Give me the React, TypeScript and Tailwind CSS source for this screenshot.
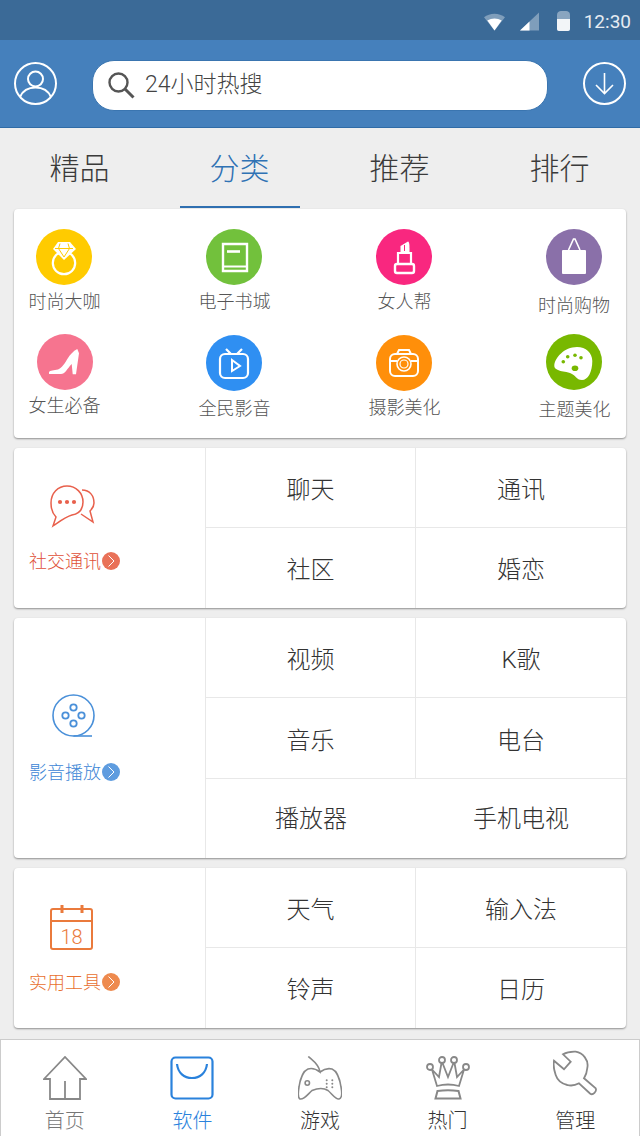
import React from "react";

const FONT = "font-['Roboto','Noto_Sans_CJK_SC',sans-serif]";

function Circle({ bg, children }: { bg: string; children: React.ReactNode }) {
  return (
    <div className={`w-14 h-14 rounded-full ${bg}`}>
      <svg width="56" height="56" viewBox="0 0 56 56" className="block">{children}</svg>
    </div>
  );
}

const Ring = () => (
  <Circle bg="bg-[#ffcb00]">
    <circle cx="28" cy="34" r="11.2" fill="none" stroke="#fff" strokeWidth="2.2" />
    <polygon points="22,13 34,13 40,20 28,31 17,20" fill="#fff" />
    <path d="M19 19.5H37M24 14.5L22.5 19.5L28 28M32 14.5L33.5 19.5L28 28" stroke="#ffcb00" strokeWidth="1" fill="none" />
  </Circle>
);
const Book = () => (
  <Circle bg="bg-[#72c13c]">
    <path d="M17 15H41V42H17Z" fill="none" stroke="#fff" strokeWidth="2.4" />
    <path d="M17 37.5H41" stroke="#fff" strokeWidth="2" />
    <path d="M21 22.5H34" stroke="#fff" strokeWidth="2.6" />
  </Circle>
);
const Lipstick = () => (
  <Circle bg="bg-[#f9277f]">
    <path d="M24.5 24V17L32 12.5C33.5 13 33.5 16 33.5 24Z" fill="#fff" />
    <path d="M22 36V24H35V36" fill="none" stroke="#fff" strokeWidth="2.2" />
    <rect x="19" y="35" width="19" height="9" rx="2" fill="none" stroke="#fff" strokeWidth="2.4" />
    <path d="M28.5 16V22" stroke="#f9277f" strokeWidth="1" />
  </Circle>
);
const Bag = () => (
  <Circle bg="bg-[#8a70a9]">
    <rect x="16" y="21" width="24" height="24" rx="1" fill="#fff" />
    <path d="M22.5 21L27.5 10H29L34 21" fill="none" stroke="#fff" strokeWidth="1.6" />
  </Circle>
);
const Shoe = () => (
  <Circle bg="bg-[#f6748f]">
    <path d="M40.3 15C36 17 33 21 31 24C28 29 25 34 21 35.5C17 36.5 13 36.5 12 38V40H24C28 40 30 35 34.7 30L35.7 40.3H39L42 19.3Z" fill="#fff" />
  </Circle>
);
const Tv = () => (
  <Circle bg="bg-[#2f8ff2]">
    <rect x="14" y="19" width="28" height="24" rx="5" fill="none" stroke="#fff" strokeWidth="2.2" />
    <path d="M20 14L25 19M36 14L31 19" stroke="#fff" strokeWidth="2.2" />
    <path d="M26 25L34 31L26 36Z" fill="none" stroke="#fff" strokeWidth="2" />
  </Circle>
);
const Camera = () => (
  <Circle bg="bg-[#ff8f0a]">
    <rect x="14" y="19" width="28" height="22" rx="5" fill="none" stroke="#fff" strokeWidth="2" />
    <path d="M21 19L23 15H33L35 19M14 26H21M35 26H42" fill="none" stroke="#fff" strokeWidth="2" />
    <circle cx="28" cy="29" r="7" fill="none" stroke="#fff" strokeWidth="1.6" />
    <circle cx="28" cy="29" r="4" fill="none" stroke="#fff" strokeWidth="1.2" />
  </Circle>
);
const Palette = () => (
  <Circle bg="bg-[#78b800]">
    <path d="M8.3 31C9 24 18 13 31 13C40 13 46.3 19 46.3 27C46.3 38 42 46 36 46C30 46 30 41 24 39C19 37 15 38 12 36C9 35 8 33 8.3 31Z" fill="#fff" />
    <circle cx="17.3" cy="27.7" r="1.8" fill="#78b800" />
    <circle cx="21.7" cy="22.7" r="1.8" fill="#78b800" />
    <circle cx="29" cy="21.3" r="1.8" fill="#78b800" />
    <circle cx="35" cy="23.7" r="1.8" fill="#78b800" />
    <ellipse cx="29" cy="34.3" rx="3.3" ry="2.8" fill="#78b800" />
  </Circle>
);

function Chevron({ bg }: { bg: string }) {
  return (
    <span className={`w-[18px] h-[18px] rounded-full shrink-0 ${bg}`}>
      <svg width="18" height="18" viewBox="0 0 18 18" className="block">
        <path d="M6.5 3.5L12 9L6.5 14.5" fill="none" stroke="#fff" strokeWidth="1" />
      </svg>
    </span>
  );
}

function Entry({ icon, label, className }: { icon: React.ReactNode; label: string; className: string }) {
  return (
    <div className="w-[72px] flex flex-col items-center">
      {icon}
      <span className={`text-[18px] leading-6 font-light text-[#555] whitespace-nowrap ${className}`}>{label}</span>
    </div>
  );
}

function Cell({ label, right, bottom, flat }: { label: string; right?: boolean; bottom?: boolean; flat?: boolean }) {
  const pad = flat ? "" : bottom ? "pt-[5px]" : "pt-[3px]";
  return (
    <div
      className={`w-[210px] shrink-0 flex items-center justify-center text-[24px] font-light text-[#333] ${pad} ${right ? "border-r border-[#e8e8e8]" : ""} ${bottom ? "border-b border-[#e8e8e8]" : ""}`}
    >
      {label}
    </div>
  );
}

function Card({ className, left, children }: { className: string; left: React.ReactNode; children: React.ReactNode }) {
  return (
    <div className={`mx-[14px] bg-white rounded-[4px] shadow-[0_1px_2px_rgba(0,0,0,0.4)] flex ${className}`}>
      <div className="w-[192px] shrink-0 border-r border-[#e8e8e8]">{left}</div>
      <div className="flex-1 flex flex-col">{children}</div>
    </div>
  );
}

const tabs = ["精品", "分类", "推荐", "排行"];

function NavItem({ label, color, icon }: { label: string; color: string; icon: React.ReactNode }) {
  return (
    <div className="flex-1 flex flex-col items-center">
      <div className="h-[53px] shrink-0">{icon}</div>
      <span className={`text-[20px] leading-6 font-light shrink-0 ${color}`}>{label}</span>
    </div>
  );
}

export default function App() {
  return (
    <div className={`w-[640px] h-[1136px] overflow-hidden bg-[#eeeeee] flex flex-col ${FONT}`}>
      {/* status bar */}
      <div className="h-10 shrink-0 bg-[#3b6a97] flex items-center justify-end pr-[9px]">
        <svg width="21" height="18" viewBox="0 0 22 18" className="mr-[15px] mt-[3px]">
          <path d="M0 4C6 -1 16 -1 22 4L11 18Z" fill="#fff" fillOpacity="0.35" />
          <path d="M3.5 7.5C8 4.5 14 4.5 18.5 7.5L11 18Z" fill="#fff" />
        </svg>
        <svg width="19" height="19" viewBox="0 0 20 19" className="mr-[18px] mt-[2px]">
          <path d="M0 19L20 0V19Z" fill="#fff" fillOpacity="0.35" />
          <path d="M0 19L10 9.5V19Z" fill="#fff" />
        </svg>
        <svg width="13" height="20" viewBox="0 0 13 20" className="mr-[14px] mt-[1px]">
          <path d="M0 4C0 1 2 0 4 0H9C11 0 13 1 13 4V18C13 19 12 20 11 20H2C1 20 0 19 0 18Z" fill="#fff" fillOpacity="0.4" />
          <path d="M0 8H13V18C13 19 12 20 11 20H2C1 20 0 19 0 18Z" fill="#f2f5f8" />
        </svg>
        <span className="text-[19px] leading-none text-[#e6ecf2] mt-[2px] font-['Roboto',sans-serif]">12:30</span>
      </div>

      {/* header */}
      <div className="h-[88px] shrink-0 bg-[#4580bc] border-b border-[#2f6ba6] flex items-center pl-[14px] pr-[14px]">
        <svg width="43" height="43" viewBox="0 0 43 43" fill="none" stroke="#fff" strokeWidth="2" className="shrink-0">
          <circle cx="21.5" cy="21.5" r="20.5" />
          <circle cx="21.5" cy="17" r="7.5" />
          <path d="M6 35C9 28 15 25.5 21.5 25.5C28 25.5 34 28 37 35" />
        </svg>
        <div className="ml-[35px] mt-[4px] w-[457px] h-[51px] rounded-[22px] bg-white border border-[#3a75b0] flex items-center pl-[15px]">
          <svg width="27" height="27" viewBox="0 0 27 27" fill="none" stroke="#555" className="shrink-0">
            <circle cx="10.5" cy="10.5" r="9" strokeWidth="2.4" />
            <path d="M17 17L25.5 25.5" strokeWidth="3" />
          </svg>
          <span className="ml-[10px] text-[23px] font-light text-[#444]">24小时热搜</span>
        </div>
        <svg width="43" height="43" viewBox="0 0 43 43" fill="none" stroke="#fff" strokeWidth="2" className="shrink-0 ml-[35px]">
          <circle cx="21.5" cy="21.5" r="20.5" />
          <path d="M21.5 11V31M13 23L21.5 31.5L30 23" strokeWidth="1.6" />
        </svg>
      </div>

      {/* tabs */}
      <div className="h-[81px] shrink-0 flex">
        {tabs.map((t, i) => (
          <div key={t} className="flex-1 relative flex items-center justify-center pr-[1px]">
            <span className={`text-[30px] font-light ${i === 1 ? "text-[#2f72b4]" : "text-[#3a3a3a]"}`}>{t}</span>
            {i === 1 && <div className="absolute bottom-[1px] left-[20px] w-[120px] h-[2px] bg-[#2f6fb0]" />}
          </div>
        ))}
      </div>

      {/* icon card */}
      <div className="mx-[14px] h-[229px] shrink-0 bg-white rounded-[4px] shadow-[0_1px_2px_rgba(0,0,0,0.4)] pl-[14px] pr-[16px] pt-[20px]">
        <div className="flex justify-between h-[85px] items-start">
          <Entry icon={<Ring />} label="时尚大咖" className="mt-[5px] ml-[1px]" />
          <Entry icon={<Book />} label="电子书城" className="mt-[5px] ml-[1px]" />
          <Entry icon={<Lipstick />} label="女人帮" className="mt-[5px] ml-[1px]" />
          <Entry icon={<Bag />} label="时尚购物" className="mt-[9px]" />
        </div>
        <div className="flex justify-between mt-[20px] items-start">
          <div className="ml-[1px] -mr-[1px]">
            <Entry icon={<Shoe />} label="女生必备" className="mt-[4px] -ml-[1px]" />
          </div>
          <div className="mt-[1px]">
            <Entry icon={<Tv />} label="全民影音" className="mt-[6px] ml-[1px]" />
          </div>
          <div className="mt-[1px]">
            <Entry icon={<Camera />} label="摄影美化" className="mt-[5px] ml-[1px]" />
          </div>
          <Entry icon={<Palette />} label="主题美化" className="mt-[8px] ml-[1px]" />
        </div>
      </div>

      {/* social */}
      <Card
        className="h-[160px] mt-[10px] shrink-0"
        left={
          <div className="pl-[15px] pt-[36px]">
            <svg width="46" height="44" viewBox="0 0 46 44" fill="none" stroke="#e8604c" strokeWidth="1.5" className="ml-[21px] block">
              <path d="M3 42L6 33C2 29 1 25 1 19C1 9 8 2 17 2C26 2 33 9 33 18C33 26 28 30 22 31C15 33 9 38 3 42Z" />
              <path d="M32 6C40 6 44 12 44 19C44 23 42 25 40 27L43 38L31 30" />
              <circle cx="10" cy="18" r="2.1" fill="#e8604c" stroke="none" />
              <circle cx="17" cy="18" r="2.1" fill="#e8604c" stroke="none" />
              <circle cx="24" cy="18" r="2.1" fill="#e8604c" stroke="none" />
            </svg>
            <div className="mt-[21px] flex items-center gap-[1px] h-6">
              <span className="text-[18px] font-light text-[#e04f38] whitespace-nowrap">社交通讯</span>
              <Chevron bg="bg-[#e97158]" />
            </div>
          </div>
        }
      >
        <div className="flex h-[80px]"><Cell label="聊天" right bottom /><Cell label="通讯" bottom /></div>
        <div className="flex flex-1"><Cell label="社区" right /><Cell label="婚恋" /></div>
      </Card>

      {/* media */}
      <Card
        className="h-[240px] mt-[10px] shrink-0"
        left={
          <div className="pl-[15px] pt-[76px]">
            <svg width="44" height="44" viewBox="0 0 44 44" fill="none" stroke="#4a90d9" strokeWidth="1.6" className="ml-[23px] block">
              <circle cx="21.5" cy="21.5" r="20.5" />
              <path d="M21.5 42H40" />
              <circle cx="21.5" cy="13.5" r="3.2" strokeWidth="1.8" />
              <circle cx="21.5" cy="29.5" r="3.2" strokeWidth="1.8" />
              <circle cx="13.5" cy="21.5" r="3.2" strokeWidth="1.8" />
              <circle cx="29.5" cy="21.5" r="3.2" strokeWidth="1.8" />
            </svg>
            <div className="mt-[22px] flex items-center gap-[1px] h-6">
              <span className="text-[18px] font-light text-[#3d86d6] whitespace-nowrap">影音播放</span>
              <Chevron bg="bg-[#5e9cdf]" />
            </div>
          </div>
        }
      >
        <div className="flex h-[80px]"><Cell label="视频" right bottom /><Cell label="K歌" bottom /></div>
        <div className="flex h-[81px]"><Cell label="音乐" right bottom /><Cell label="电台" bottom /></div>
        <div className="flex flex-1"><Cell label="播放器" flat /><Cell label="手机电视" flat /></div>
      </Card>

      {/* tools */}
      <Card
        className="h-[160px] mt-[10px] shrink-0"
        left={
          <div className="pl-[15px] pt-[37px]">
            <svg width="44" height="46" viewBox="0 0 44 46" fill="none" stroke="#ea7a3c" strokeWidth="2" className="ml-[21px] block">
              <rect x="1" y="4" width="41" height="40" rx="2" />
              <path d="M1 16H42" />
              <path d="M12 0V8M32 0V8" strokeWidth="3" />
              <text x="21.5" y="38.5" textAnchor="middle" fontSize="20" fill="#ea7a3c" stroke="none" fontFamily="Roboto, sans-serif" fontWeight="300">18</text>
            </svg>
            <div className="mt-[19px] flex items-center gap-[1px] h-6">
              <span className="text-[18px] font-light text-[#e8702e] whitespace-nowrap">实用工具</span>
              <Chevron bg="bg-[#ee8a4e]" />
            </div>
          </div>
        }
      >
        <div className="flex h-[80px]"><Cell label="天气" right bottom /><Cell label="输入法" bottom /></div>
        <div className="flex flex-1"><Cell label="铃声" right /><Cell label="日历" /></div>
      </Card>

      {/* bottom nav */}
      <div className="mt-[11px] flex-1 bg-white border border-b-0 border-[#cccccc] flex pt-[16px] overflow-hidden">
        <NavItem
          label="首页"
          color="text-[#777]"
          icon={
            <svg width="44" height="44" viewBox="0 0 44 44" fill="none" stroke="#888" strokeWidth="1.8">
              <path d="M1 23L22 1L43 23H37V43H7V23Z" />
              <path d="M22 25V43" />
            </svg>
          }
        />
        <NavItem
          label="软件"
          color="text-[#2a82dc]"
          icon={
            <svg width="44" height="44" viewBox="0 0 44 44" fill="none" stroke="#2a82dc" strokeWidth="2.2">
              <rect x="1.5" y="1.5" width="41" height="41" rx="4" />
              <path d="M7 8C8 17 14 22 22 22C30 22 36 17 37 8" />
            </svg>
          }
        />
        <NavItem
          label="游戏"
          color="text-[#333]"
          icon={
            <svg width="44" height="44" viewBox="0 0 44 44" fill="none" stroke="#888" strokeWidth="1.6">
              <path d="M10.3 0.5C14 4 21 8 22 16C18 13 13 12 10 13C5 15 2 24 1 31C0 37 0 42 2 43C6 44 10 38 14 34.5C20 32 26 32 30 34.5C34 38 38 44 41 43C44 42 44 36 43 31C42 24 39 15 34 13C30 12 26 13 22 16" />
              <circle cx="9.3" cy="27" r="2.2" />
              <circle cx="28.7" cy="24.3" r="1" fill="#888" stroke="none" />
              <circle cx="34.3" cy="24.3" r="1" fill="#888" stroke="none" />
              <circle cx="28.7" cy="27.7" r="1" fill="#888" stroke="none" />
              <circle cx="34.3" cy="27.7" r="1" fill="#888" stroke="none" />
              <circle cx="28.7" cy="31.3" r="1" fill="#888" stroke="none" />
              <circle cx="34.3" cy="31.3" r="1" fill="#888" stroke="none" />
            </svg>
          }
        />
        <NavItem
          label="热门"
          color="text-[#333]"
          icon={
            <svg width="44" height="44" viewBox="0 0 44 44" fill="none" stroke="#888" strokeWidth="1.8">
              <circle cx="4" cy="11" r="3" />
              <circle cx="16" cy="4" r="3" />
              <circle cx="28" cy="4" r="3" />
              <circle cx="40" cy="11" r="3" />
              <path d="M6 13.5L13 21L15.5 7M16.5 7L22 21L27.5 7M28.5 7L31 21L38 13.5L33 30Q22 27 11 30L6 13.5" />
              <path d="M9.5 42.5L11.5 35Q22 33.5 32.5 35L34.5 42.5Z" strokeWidth="2" />
            </svg>
          }
        />
        <NavItem
          label="管理"
          color="text-[#333]"
          icon={
            <svg width="44" height="46" viewBox="0 0 44 46" fill="none" stroke="#888" strokeWidth="1.8" className="-mt-[6px]">
              <path d="M1 10.7L11 19.3L17.7 11.7L10 4.3C14 2 18 1.5 22.7 1.7C30 3 36 10 34.3 18C34 22 33 25 31 28.3L42.7 38.3C44 41 40 46 37 43.5L26 33.3C22 35.5 18 36 14.3 35C8 33.5 4 29 2.7 25C1 20 0 15 1 10.7Z" />
            </svg>
          }
        />
      </div>
    </div>
  );
}
